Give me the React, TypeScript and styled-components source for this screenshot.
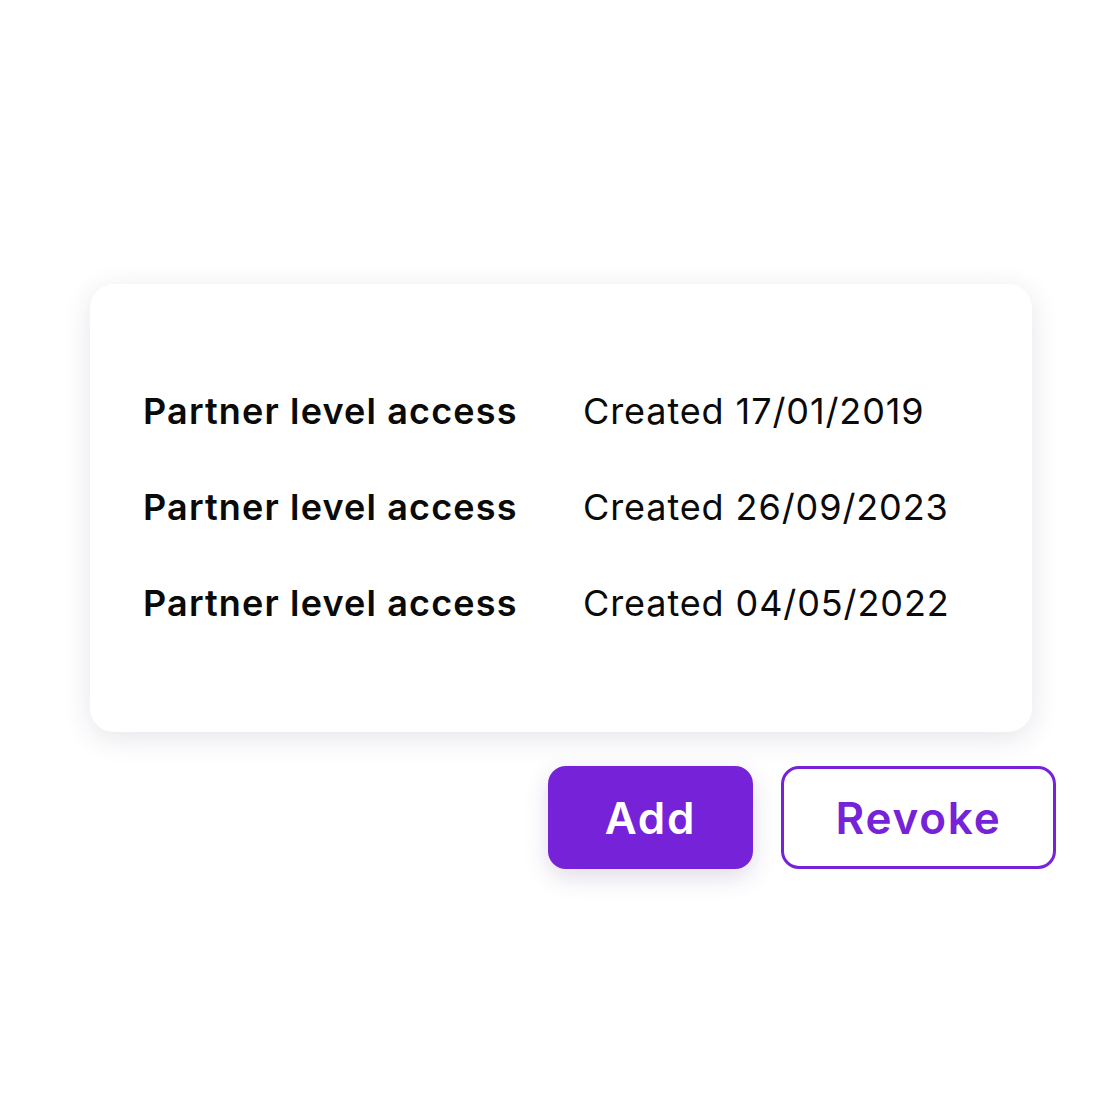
import React from "react";
import styled, { createGlobalStyle } from "styled-components";

const Global = createGlobalStyle`
  html, body { margin: 0; padding: 0; background: #ffffff; }
  body { font-family: Inter, "Open Sans", sans-serif; color: #0a0a0a; }
`;

const Page = styled.div`
  width: 1120px;
  height: 1120px;
  box-sizing: border-box;
  padding: 284px 0 0 90px;
`;

const Stack = styled.div`
  width: 966px;
  display: flex;
  flex-direction: column;
  gap: 34px;
`;

const Card = styled.div`
  width: 942px;
  height: 448px;
  box-sizing: border-box;
  background: #ffffff;
  border-radius: 24px;
  box-shadow: 0 6px 28px rgba(40, 30, 80, 0.12);
  padding: 79px 0 0 53px;
  display: grid;
  grid-template-columns: 440px auto;
  grid-auto-rows: 96px;
  align-content: start;
`;

const Label = styled.div`
  font-size: 36px;
  font-weight: 600;
  line-height: 96px;
  letter-spacing: 1.15px;
`;

const Value = styled.div`
  font-size: 36px;
  font-weight: 400;
  line-height: 96px;
  letter-spacing: 0.9px;
`;

const Actions = styled.div`
  display: flex;
  justify-content: flex-end;
  gap: 28px;
`;

const Button = styled.button<{ $variant: "solid" | "outline" }>`
  box-sizing: border-box;
  height: 103px;
  border-radius: 18px;
  font-family: Inter, sans-serif;
  font-size: 44px;
  font-weight: 600;
  letter-spacing: 1.8px;
  cursor: pointer;
  ${(p) =>
    p.$variant === "solid"
      ? `width: 205px; background: #7622d8; color: #ffffff; border: none; box-shadow: 0 8px 24px rgba(60, 30, 110, 0.16);`
      : `width: 275px; background: #ffffff; color: #7622d8; border: 3px solid #7622d8;`}
`;

const rows = [
  ["Partner level access", "Created 17/01/2019"],
  ["Partner level access", "Created 26/09/2023"],
  ["Partner level access", "Created 04/05/2022"],
];

export default function App() {
  return (
    <>
      <Global />
      <Page>
        <Stack>
          <Card>
            {rows.map(([l, v], i) => (
              <React.Fragment key={i}>
                <Label>{l}</Label>
                <Value>{v}</Value>
              </React.Fragment>
            ))}
          </Card>
          <Actions>
            <Button $variant="solid">Add</Button>
            <Button $variant="outline">Revoke</Button>
          </Actions>
        </Stack>
      </Page>
    </>
  );
}
